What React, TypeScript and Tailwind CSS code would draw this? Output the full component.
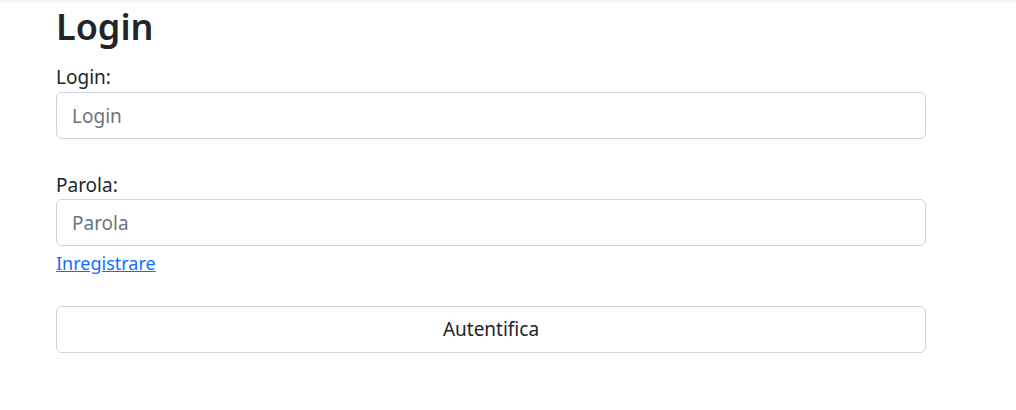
export default function App() {
  return (
    <div className="min-h-[410px] bg-white text-[#212529]" style={{ fontFamily: '"Noto Sans", "Open Sans", sans-serif' }}>
      <div className="h-[4px] bg-gradient-to-b from-[#f3f3f3] to-white" />
      <form className="pl-[56px] w-[926px] flex flex-col" onSubmit={(e) => e.preventDefault()}>
        <h1 className="text-[36px] font-semibold leading-[46px] mt-0">Login</h1>
        <label htmlFor="login" className="text-[19px] leading-[26px] mt-[14px] mb-[2px]">
          Login:
        </label>
        <input
          id="login"
          placeholder="Login"
          className="h-[47px] w-full rounded-[6px] border border-[#ced4da] px-[15px] text-[19px] placeholder:text-[#6c757d] outline-none"
        />
        <label htmlFor="parola" className="text-[19px] leading-[26px] mt-[33px] mb-[1px]">
          Parola:
        </label>
        <input
          id="parola"
          type="password"
          placeholder="Parola"
          className="h-[47px] w-full rounded-[6px] border border-[#ced4da] px-[15px] text-[19px] placeholder:text-[#6c757d] outline-none"
        />
        <div className="mt-[3px] leading-[28px]">
          <a href="#" className="text-[18px] text-[#0d6efd] underline">
            Inregistrare
          </a>
        </div>
        <button
          type="submit"
          className="mt-[28px] h-[47px] w-full rounded-[6px] border border-[#ced4da] bg-white text-[19px] text-[#212529]"
        >
          Autentifica
        </button>
      </form>
    </div>
  );
}
